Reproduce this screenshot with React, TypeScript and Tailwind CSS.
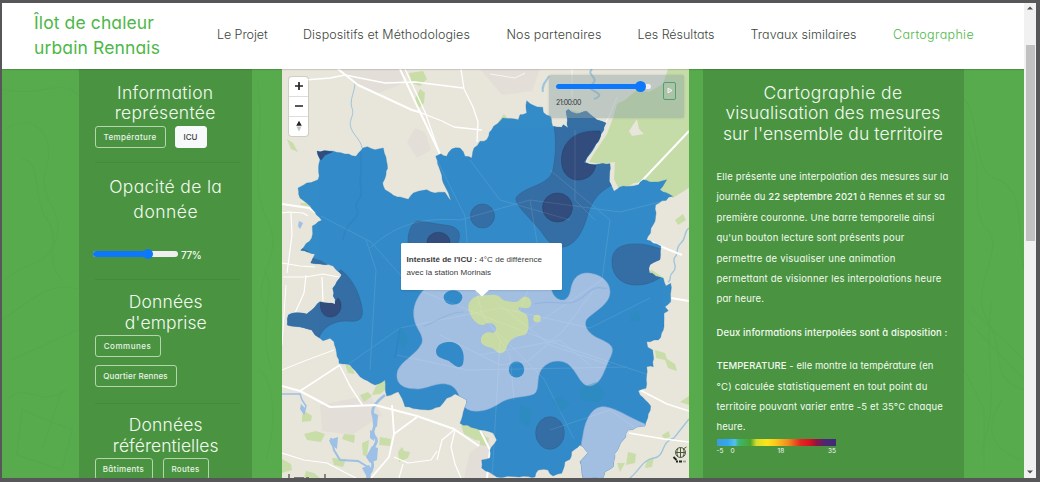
import React from "react";

type Pt = [number, number];

/* Adds small deterministic wiggles to a coarse boundary. */
function rough(points: Pt[], amp: number): string {
  let seed = 7;
  const rnd = () => {
    seed = (seed * 16807) % 2147483647;
    return seed / 2147483647 - 0.5;
  };
  let d = "";
  points.forEach((p, i) => {
    const q = points[(i + 1) % points.length];
    const len = Math.hypot(q[0] - p[0], q[1] - p[1]);
    const n = Math.max(1, Math.round(len / 4));
    d += `${i ? "L" : "M"}${p[0]} ${p[1]}`;
    for (let k = 1; k < n; k++) {
      const t = k / n;
      d += `L${(p[0] + (q[0] - p[0]) * t + rnd() * amp).toFixed(1)} ${(p[1] + (q[1] - p[1]) * t + rnd() * amp).toFixed(1)}`;
    }
  });
  return d + "Z";
}

const TERRITORY: Pt[] = [
  [317, 151], [333, 151], [356, 156.3], [362.7, 148], [367.3, 146.7], [375, 149.7], [383.3, 148], [384.3, 153],
  [387.3, 164.7], [386, 174.7], [382.7, 183], [385, 189.7], [393.3, 195.3], [408.3, 199.3], [413.3, 193],
  [426.7, 189.7], [435, 193], [445, 192.3], [451, 200.7], [443.3, 183], [435.7, 156.3], [441, 153.7], [446.7, 156.3],
  [451.7, 149], [460, 148], [465, 156.3], [471.7, 158], [474, 148], [480, 141.3], [486.7, 139.7], [491.7, 129.7],
  [500, 121.3], [502.7, 118], [518.3, 119.7], [520, 114.7], [526.7, 113], [526.7, 100.7], [533.3, 105.3],
  [542.7, 107.3], [543.3, 112.3], [550.7, 116.3], [552.7, 126.3], [561.7, 127.3], [563.3, 124.7], [568.3, 128],
  [566, 111.3], [568.3, 109.3], [576.7, 113.7], [586.7, 111.3], [596.7, 119.7], [606, 123], [600, 138], [590, 154],
  [585, 162.3], [595, 164.7], [610, 163.7], [609.3, 181.3], [614, 191.3], [620, 187], [630, 186.3], [638.3, 184.7],
  [643.3, 179.7], [653.3, 182], [666.7, 179.7], [660, 189.7], [672.7, 196.3], [655.7, 204.7], [655, 221.3],
  [646.7, 239.7], [661, 246.3], [660, 259.7], [650, 264.7], [649.3, 272.7], [663.3, 278.3], [666, 286],
  [670.7, 283.3], [670.7, 301.7], [665, 306.7], [668.3, 310.7], [664, 313.3], [663.3, 330], [658.3, 340],
  [646.7, 341.7], [647.7, 347.3], [652.7, 350], [653.3, 366.7], [646.7, 366.7], [646, 388.3], [638.3, 390.7],
  [640, 395], [650.7, 406], [645, 426], [628.3, 430], [623.3, 440], [615, 453.3], [613.3, 466.7], [605, 471.7],
  [603, 478], [583, 478], [580, 461.7], [588, 452.7], [580, 445], [571.7, 451.7], [570, 459.3], [565, 461.7],
  [561.7, 473.3], [553, 476], [548, 470], [538.3, 470], [535, 477], [496.7, 477], [481.7, 468], [481.7, 460],
  [490, 458], [490, 450], [496.7, 440], [493, 433], [480, 430], [460, 423.3], [466.7, 400], [455, 394],
  [446.7, 398.3], [440, 406.7], [428.3, 410], [405, 406.7], [398.3, 391.7], [386.7, 396], [385, 380], [375, 385],
  [360, 376.7], [350, 365], [339, 363.3], [334, 341.7], [330, 338.3], [323, 340.7], [315, 335], [311.7, 330],
  [287.3, 325], [288.3, 315], [295, 312.7], [306.7, 314], [320, 301.7], [335, 304.3], [332.7, 288.3], [341.7, 275],
  [333, 266], [320, 264], [310.7, 263], [315, 254], [300.7, 250.3], [311.7, 238], [312.3, 226], [321.7, 220.3],
  [310, 206], [300, 198], [298, 188], [306.7, 183], [318, 179.7], [320, 159.7],
];
const TERRITORY_PATH = rough(TERRITORY, 1.6);

function HeatMap() {
  return (
    <svg viewBox="282 69 407 409" className="block h-[409px] w-[407px]" aria-hidden="true">
      <defs>
        <clipPath id="territory"><path d={TERRITORY_PATH} /></clipPath>
      </defs>
      <rect x="282" y="69" width="407" height="409" fill="#e8e5da" />
      <g fill="#e3dfd8">
        <path d="M338 69h70l-8 16-22 8-25-10z M415 128l10 4 6 18-14 8-10-16z M320 405l50-10 12 20-30 20-30-4z M470 452l20-12 4 38h-30z M480 69h60l-8 22-30 4z" />
      </g>
      {/* woodland */}
      <path fill="#c5dca8" d="M668 69h21v119l-16 10-13-9-8-8-18 2-14 8-6-12 1-17-14 2-12-2 6-10 12-18 6-16 4-14 8-4 12-10 12 2 14-8z" />
      <path fill="#e8e5da" d="M629 131l8-12 2 10 5 5-12 2z M673 198l16-10v24l-8 2z" />
      <g fill="#c9dda9">
        <path d="M409 73l14-2 4 8-7 7-8-3z M420 89l5 4-1 10-6 6-3-10z M287 139l6 4 5 9-7-3z M300 203l8 0 2 4-9-2z" />
        <path d="M345 364l6 2 4 8-7-1z M360 395l8-3 4 4-8 6z M376 386l9-6 3 8-8 6-8 1z M304 434l12-3 9 3-4 8-14-2z M344 434l11 1-1 8-12-4z M380 437l11 2-1 7-11-1z M398 452l4-5 2 4 6 1-2 6-9 4z M332 458l14 1-3 8-9-2z M362 443l7-3-2 17-4-2z M302 415l4-3 6 4-1 5-9 1z" />
        <path d="M461 425l19 3 9 14-14-2-11-6z M480 435l9 3-2 8-7-1z M655 350l10 3 2 6 8 5 2 7-9-3-3-8-9-2z M628 452l8 2-1 9-9 2z M647 460l7-3-2 10-7 1z M680 402l9-6v9z M617 463l8 0-5 9z M644 273l8-3 12 8-5 8-9-8z M675 220l8-6 3 6-8 5z M498 122l6-8 4 5-7 5z M570 110l9 2-3 4z M662 435l7-4 1 6-6 2z M282 459l9 5 1 6-10 3z M306 471l8 2 6 5h-16z" />
      </g>
      {/* rivers and ponds */}
      <g fill="none" stroke="#9fc5dc" strokeWidth="1">
        <path d="M355 82c0 10-6 18-3 26s-4 12-1 20 10 12 11 20" />
        <path d="M543 92c-2-8 4-11 6-16 M592 69c-6 6 6 8 2 13s-6 6 0 9 8 5 0 8" strokeWidth="2" />
        <path d="M689 228c-6 4-2 10-8 15s-2 10-6 14 4 10-2 15 0 8-5 10 M630 478c10-8 12-18 24-20s6-16 20-20l15-19" strokeWidth="1.4" />
      </g>
      <g fill="none" stroke="#9dc0e6" strokeWidth="2">
        <path d="M282 394h18l2 6 4 6-2 8" strokeWidth="1.500" />
        <path d="M385 395c-8 6-16 14-11 22s-5 14 1 20-8 14-4 22 0 12-4 19" strokeWidth="2.800" />
        <path d="M331 438l3 12 6 10 18 1 10 6 2 11" />
      </g>
      <g fill="#9dc0e6">
        <path d="M329 440l9-3-1 12-6-4z M372 412l6 3-1 12-4-2z M372 446l6 2-1 12-7 3-4-6z M362 468l7-3 4 6-6 6z M299 221l4 2-3 6-2-3z M301 404l4 4-1 7-4-6z M370 430l5 3-1 8-4-3z" />
      </g>
      {/* roads */}
      <g fill="none" stroke="#fff" strokeLinejoin="round">
        <path d="M282 204l27 4 12 8 M338 69l20 16 54 25 7 2 M400 69l20 43 20 42" strokeWidth="2" />
        <path d="M405 69l20 43 14 40" strokeWidth="1.300" />
        <path d="M292 81l38-3 15-3 40 8 30-1 48 6 M461 69l3 20 9 18 5 15-1 20 M419 112l23 9 12 6 28 3" strokeWidth="1.300" />
        <path d="M282 213l7-1 14 1 5 3 M291 213l1 22-5 38 M282 263l18 3 15 1" strokeWidth="1.200" />
        <path d="M283 277l23 0 17-3 16 3 M322 277l1 24 M306 275l-2 18-9 20" strokeWidth="1.200" />
        <path d="M286 285l-4 60 M282 370l25-10 27-10" strokeWidth="1" />
        <path d="M282 386l18 5 30 16 45-2 42 11 37 13 25 17" strokeWidth="2" />
        <path d="M300 391l40-26 M340 366l10 20 13 20" strokeWidth="1.500" />
        <path d="M417 417l-23 17-5 23-18 21 M392 405l2 29" strokeWidth="1.800" />
        <path d="M455 430l-4 17 4 17 6 14 M454 430l-12 10-5 20 M394 457l14 6 23-3 6-9 M399 478l4-14" strokeWidth="1.200" />
        <path d="M282 453l22 7 23 3 17 9 12 6" strokeWidth="1.200" />
        <path d="M480 430l10 20-3 28" strokeWidth="2" />
        <path d="M638 185l51-54 M647 240l20 9 15 6 M671 298l18 3" strokeWidth="2" />
        <path d="M640 390l27 14 22 7 M629 433l35 6 25 3" strokeWidth="1.600" />
        <path d="M617 97l-8 20-5 8 M572 69v28 M490 74l25 4 10-5" strokeWidth="1" opacity=".7" />
      </g>
      <path d={TERRITORY_PATH} fill="#338bc8" stroke="#2f7fb9" strokeWidth=".3" />
      <g clipPath="url(#territory)">
        {/* cooler and rural zones */}
        <g fill="#366fa4" stroke="#2f6293" strokeWidth=".6">
          <path d="M552 118C556 130 557 150 553 170C551 180 540 184 530 188C522 192 515 196 516 200C518 208 530 218 540 230C546 238 550 246 560 247C575 248 584 230 588 213C593 200 598 192 614 184L625 100L550 100Z" />
          <path d="M408 242C408 232 411 223 418 221L444 225C456 226 461 230 459 240L455 250H408Z" />
          <ellipse cx="482.500" cy="216" rx="12" ry="12" />
          <path d="M612 262C612 248 622 244 636 244C646 244 650 246 665 250V274C655 282 646 285 636 285C622 285 612 276 612 262Z" />
          <path d="M341 270C354 280 360 296 362 308C364 320 358 322 348 321C336 320 322 326 318 340L284 330V300Z" />
          <ellipse cx="550" cy="433" rx="14.300" ry="16.300" />
          <path d="M299 247l9 4 1 1-8 2z M308 256l14 5 22 15-6-1-12-8-18-2z" stroke="none" />
        </g>
        <g fill="#314c7d" stroke="#29446f" strokeWidth=".5">
          <path d="M600 131C582 130 568 136 563 150C558 168 566 179 577 180C588 180 594 174 596 165L583 163L590 152L601 136Z" />
          <ellipse cx="557.500" cy="207.500" rx="15" ry="14.500" />
          <ellipse cx="438.500" cy="242" rx="11.500" ry="9.800" />
          <path d="M321 300l13 4 4-6c6 6 3 19-8 19-8 0-11-9-9-17z" />
          <path d="M314 149l18 3-7 3-4 5z" />
        </g>
        {/* urban zone */}
        <g fill="#a2bfe2" stroke="#8fb0d8" strokeWidth=".5">
          <path d="M428 286C418 294 412 306 414 318C416 330 424 334 422 343C416 356 398 362 397 374C396 386 406 389 418 389C430 388 438 381 450 385C460 389 460 404 467 409C476 414 490 410 500 403C510 396 524 398 534 394C540 390 536 378 541 370C548 360 560 359 568 364C578 372 580 386 590 386C602 384 604 370 610 358C616 346 610 344 600 339C590 335 582 326 587 319C596 310 610 304 610 292C610 280 598 273 586 273C576 274 573 280 571 288C569 304 558 302 553 294L550 286Z" />
          <path d="M603 478h-20c-3-10-4-25 0-43 3-20 12-30 23-28 12 2 20 9 39 17l-3 54z" />
        </g>
        <g fill="#338bc8">
          <ellipse cx="453" cy="297.500" rx="9.300" ry="7.300" />
          <path d="M436 351C437 344 443 342 450 342C460 342 466 352 463 364C460 370 455 366 449 361C442 358 436 358 436 351Z" />
          <ellipse cx="516.500" cy="369.500" rx="7.700" ry="8" />
        </g>
        {/* city centre */}
        <path fill="#c9dba5" d="M481 295C472 296 466 304 469 311C471 319 478 326 484 325C488 323 481 325 488 323C496 322 499 331 493 333C488 331 480 333 481 342C484 348 492 346 496 351C501 356 506 352 507 346C511 338 516 336 525 335C530 331 529 322 527 315C523 312 517 311 519 307C524 308 529 310 531 305C532 299 528 296 523 297C519 300 519 302 513 302C506 301 503 301 500 297C494 293 488 296 481 295Z" />
        <circle cx="537" cy="318.500" r="3.800" fill="#c9dba5" />
        <g fill="none" stroke="#fff" strokeWidth="1" opacity=".1">
          <path d="M321 216l50 26 40 45 80 32 80 30 90 30 M435 156l30 60 4 50 15 53 60 60 30 60 M370 248c30-28 60-30 90-28l70-20 90 12 40-10 M340 370l60-42 100-20 90 20 60-30 M500 340l-8 138 M397 355l70 15 160-3 M530 200l10 60-20 50 M550 170l60 50-8 60-90 60 M366 240l10 30-6 100 M470 160l30 40 70 20" />
          <path d="M440 335l60 30 28-4 35-30 30-40 M500 305l50 40 60 20 M480 355l80-15 30 25 M550 430l60-20 28 20 M575 130v70l20 20 M480 310l30 45 4 45" />
        </g>
        <path d="M360 150c4 20-2 30 1 40s-8 10-4 20-12 10-14 30 M400 328l-5 30" fill="none" stroke="#2b7cb9" strokeWidth="1.500" opacity=".35" />
        <path d="M424 326c14-4 22-14 40-14 M534 304c20-6 34 6 50-8s14-6 24-8" fill="none" stroke="#7ea8d8" strokeWidth="1.200" opacity=".4" />
        <g fill="#278bb8" opacity=".35">
          <path d="M580 388l16-6 10 12-8 9-18-3z M552 400l10-4 8 8-10 8z M520 405l12 4-3 18-10-6z M630 315l8-4 2 9-9 2z M400 326l8 12-4 12-6-8z M355 392l6-3-2 9z" />
        </g>
      </g>
      {/* basemap credit mark */}
      <g stroke="#4c5a3c" fill="none" strokeWidth="1">
        <circle cx="680.500" cy="452.500" r="5" />
        <path d="M675.500 452.500h10 M680.500 447.500v10 M678 448.500c-1.500 3-1.500 5 0 8 M683 448.500c1.500 3 1.500 5 0 8 M684 448.500l2.500-1.500" />
      </g>
      <path d="M673.500 457l3 3 M676 461.500h2 M679 461.500h3" stroke="#222" strokeWidth="1.800" />
      <path d="M683 461.500h3" stroke="#9aa58c" strokeWidth="1.800" />
      <path d="M289 478v-4 M325 478v-4" stroke="#444" strokeWidth="1.200" />
      <path d="M294 477.500h10 M306 477.500h3" stroke="#777" strokeWidth="1" />
    </svg>
  );
}

/* Faint contour drawing printed on the green background. */
function Contours() {
  return (
    <svg viewBox="0 0 1022 408" preserveAspectRatio="none" className="absolute inset-0 h-full w-full" aria-hidden="true">
      <g fill="none" stroke="#3f8f38" strokeWidth="1" opacity=".11">
        <path d="M0 20c40 10 60-14 78 8M4 60c30-20 50 10 40 40s20 40 10 70-30 20-50 40M20 90c20 0 10 40 25 60s-5 40 15 60M0 250c30-20 50-40 76-30M10 290l66-30M5 330c20-20 30 10 60-10M20 340l50 20-10 40-45-15zM60 320l-20 60" />
        <path d="M955 20c30 30 10 80 40 90s20 60 27 90M965 60c20 40 0 80 20 100s-20 60 0 90 0 60 37 70M965 250l57 60M970 240l52 50M990 230c-10 60 10 90-10 150M1000 330c-20 30-10 50 20 60M962 300l20 40 0 60" />
        <path d="M255 10c10 60-10 100 10 140s-20 60 0 90M262 200c14 20-8 60 8 100M258 300c10 10 20 40 6 90" />
        <path d="M90 20c30 40 10 60 50 90s10 60 60 80M100 240c50 10 40 60 120 50M110 380c40-40 90-10 130-60M720 100c60 30 60 10 120 60M780 300c50-30 60 20 170-30M860 20c-10 50 40 60 60 110" />
      </g>
    </svg>
  );
}

function Line({ className = "", children }: { className?: string; children: React.ReactNode }) {
  return <span className={"block whitespace-nowrap " + className}>{children}</span>;
}

function Title({ className = "leading-[20.5px]", children }: { className?: string; children: React.ReactNode }) {
  return <h2 className={"text-center text-[17.5px] font-light text-[#f2fbf0] " + className}>{children}</h2>;
}

function Tag({ active = false, className = "", children }: { active?: boolean; className?: string; children: React.ReactNode }) {
  return (
    <button
      className={
        "flex h-[22px] shrink-0 items-center justify-center whitespace-nowrap rounded-[3px] border text-[8px] font-medium " +
        (active ? "border-[#f8f9fa] bg-[#f8f9fa] text-[#3a3d40] " : "border-[#b5d5ad] text-[#e9f5e6] ") +
        className
      }
    >
      {children}
    </button>
  );
}

function Divider({ className = "" }: { className?: string }) {
  return <hr className={"h-px w-[145px] border-0 bg-[#468b3b] " + className} />;
}

function ControlsPanel() {
  return (
    <aside className="relative ml-[76.500px] h-[409px] w-[173.500px] overflow-hidden bg-[#4a9140]/95 pl-[16px] pr-[15px] pt-[13.500px]">
      <Title className="pr-[1px] leading-[20.500px]">
        <Line className="tracking-[0.3px]">Information</Line>
        <Line className="tracking-[0.3px]">représentée</Line>
      </Title>
      <div className="mt-[2px] flex gap-[9px]">
        <Tag className="w-[71px] tracking-[0.35px]">Température</Tag>
        <Tag active className="w-[32px]">ICU</Tag>
      </div>
      <Divider className="mt-[14px]" />
      <Title className="mt-[11.500px] leading-[25px]">
        <Line className="tracking-[0.34px]">Opacité de la</Line>
        <Line className="tracking-[0.5px]">donnée</Line>
      </Title>
      <div className="-ml-[2px] mt-[22px] flex h-[16px] items-center">
        <div className="flex h-[6px] w-[85px] items-center rounded-[3px] bg-[#efefef]">
          <div className="h-[6px] w-[52px] rounded-l-[3px] bg-[#0d78fb]" />
          <div className="-ml-[2px] size-[10px] rounded-full bg-[#0d78fb]" />
        </div>
        <span className="ml-[3.500px] mt-[2px] text-[10px] font-medium tracking-[-0.450px] text-[#f2fbf0]">77%</span>
      </div>
      <Divider className="mt-[17px]" />
      <Title className="mt-[12px] leading-[20.500px]">
        <Line className="tracking-[0.15px]">Données</Line>
        <Line className="tracking-[0.1px]">d'emprise</Line>
      </Title>
      <div className="mt-[2px] flex flex-col items-start gap-[8px]">
        <Tag className="w-[66px] tracking-[0.5px]">Communes</Tag>
        <Tag className="w-[82px] tracking-[0.15px]">Quartier Rennes</Tag>
      </div>
      <Divider className="mt-[16px]" />
      <Title className="mt-[11px] leading-[20.500px]">
        <Line className="tracking-[0.15px]">Données</Line>
        <Line className="tracking-[0.05px]">référentielles</Line>
      </Title>
      <div className="mt-[2px] flex gap-[10px]">
        <Tag className="w-[58px] tracking-[0.33px]">Bâtiments</Tag>
        <Tag className="w-[46px] tracking-[0.27px]">Routes</Tag>
      </div>
    </aside>
  );
}

function MapView() {
  return (
    <div className="relative ml-[30px] h-[409px] w-[407px] shrink-0 overflow-hidden">
      <HeatMap />
      <div className="absolute left-[7px] top-[7.500px] flex w-[19px] flex-col rounded-[3px] bg-white shadow-[0_0_0_1px_rgba(0,0,0,.1)]">
        <button className="flex h-[20px] items-center justify-center border-b border-[#ddd]">
          <svg viewBox="0 0 8 8" className="size-[8px]"><path d="M4 .5v7M.5 4h7" stroke="#222" strokeWidth="1.700" strokeLinecap="round" /></svg>
        </button>
        <button className="flex h-[20px] items-center justify-center border-b border-[#ddd]">
          <svg viewBox="0 0 8 8" className="size-[8px]"><path d="M.5 4h7" stroke="#222" strokeWidth="1.700" strokeLinecap="round" /></svg>
        </button>
        <button className="flex h-[19px] items-center justify-center">
          <svg viewBox="0 0 8 12" className="h-[12px] w-[8px]"><path d="M1.200 5.700L4 .8l2.800 4.900z" fill="#222" /><path d="M1.500 6.500h5L4 11.500z" fill="#c4c4c4" /></svg>
        </button>
      </div>
      <div className="absolute left-[266.500px] top-[6px] flex h-[43px] w-[135.500px] rounded-[2px] bg-[#8fa3a3]/45 shadow-[0_0_2px_rgba(100,110,100,.3)]">
        <div className="ml-[7.500px] mt-[6.500px] w-[97px]">
          <div className="flex h-[10px] items-center">
            <div className="flex h-[5px] w-[95px] items-center rounded-[3px] bg-[#efefef]">
              <div className="h-[5px] w-[81px] rounded-l-[3px] bg-[#0d78fb]" />
              <div className="-ml-[2px] size-[11px] rounded-full bg-[#0d78fb]" />
            </div>
          </div>
          <div className="mt-[6px] text-[7px] leading-[9px] tracking-[-0.500px] text-[#30383c]">21:00:00</div>
        </div>
        <button className="ml-[10px] mt-[6.500px] flex h-[18px] w-[13px] items-center justify-center rounded-[2px] border border-[#4f9f79]">
          <svg viewBox="0 0 6 7" className="h-[7px] w-[6px]"><path d="M1 1.200l4 2.300-4 2.300z" fill="#b9cfc5" stroke="#f4f8f4" strokeWidth="1" /></svg>
        </button>
      </div>
      <div className="absolute left-[118.500px] top-[173.500px] h-[47.500px] w-[161px] rounded-[1.500px] bg-white pl-[6px] pt-[10.500px] font-['Liberation_Sans',sans-serif] text-[8px] leading-[13.300px] text-[#3a3a3a] shadow-[0_1px_2px_rgba(0,0,0,.1)]">
        <Line className="tracking-[0.054px]"><b>Intensité de l'ICU :</b> 4°C de différence</Line>
        <Line className="tracking-[0.04px]">avec la station Morinais</Line>
        <svg viewBox="0 0 14 7" className="absolute left-[74px] top-[47px] h-[7px] w-[14px]"><path d="M0 0h14L7 6.500z" fill="#fff" /></svg>
      </div>
    </div>
  );
}

function InfoPanel() {
  return (
    <section className="relative ml-[14px] h-[409px] w-[260.500px] shrink-0 overflow-hidden bg-[#4a9140]/95 pl-[13.500px] pt-[13.500px] text-[#f2fbf0]">
      <Title className="pr-[14px] leading-[20.500px]">
        <Line className="tracking-[0.4px]">Cartographie de</Line>
        <Line className="tracking-[0.17px]">visualisation des mesures</Line>
        <Line className="tracking-[0.08px]">sur l'ensemble du territoire</Line>
      </Title>
      <div className="mt-[23px] text-[9.500px] leading-[20.400px]">
        <p>
          <Line className="tracking-[0.149px]">Elle présente une interpolation des mesures sur la</Line>
          <Line className="tracking-[0.091px]">journée du <b className="font-medium">22 septembre 2021</b> à Rennes et sur sa</Line>
          <Line className="tracking-[0.185px]">première couronne. Une barre temporelle ainsi</Line>
          <Line className="tracking-[0.195px]">qu'un bouton lecture sont présents pour</Line>
          <Line className="tracking-[0.24px]">permettre de visualiser une animation</Line>
          <Line className="tracking-[0.204px]">permettant de visionner les interpolations heure</Line>
          <Line className="tracking-[0.116px]">par heure.</Line>
        </p>
        <p className="mt-[13px] font-medium"><Line className="tracking-[0.116px]">Deux informations interpolées sont à disposition :</Line></p>
        <p className="mt-[13px]">
          <Line className="tracking-[0.041px]"><b className="font-medium">TEMPERATURE</b> - elle montre la température (en</Line>
          <Line className="tracking-[0.235px]">°C) calculée statistiquement en tout point du</Line>
          <Line className="tracking-[0.162px]">territoire pouvant varier entre -5 et 35°C chaque</Line>
          <Line className="tracking-[0.089px]">heure.</Line>
        </p>
      </div>
      <div className="mt-[1px] h-[7px] w-[119.500px] bg-[linear-gradient(90deg,#3d9bdc_0%,#2fa8f0_9%,#55bff0_15%,#3bb878_18%,#4aa52c_28%,#d8dc28_33%,#fbe51b_42%,#fbc41a_50%,#f08a1d_60%,#e22a20_70%,#d81222_78%,#8a1746_84%,#4d2874_91%,#3d2a7a_100%)]" />
      <div className="mt-[1px] flex w-[119.500px] text-[6.500px] leading-[9px]">
        <span className="w-[14px]">-5</span>
        <span className="w-[47px]">0</span>
        <span>18</span>
        <span className="ml-auto">35</span>
      </div>
    </section>
  );
}

export default function App() {
  return (
    <div className="flex h-[482px] w-[1040px] overflow-hidden bg-[#57575a] pb-[4px] pl-[2px] pr-[4px] pt-[3px] font-['Inter',sans-serif] [font-feature-settings:'cv11']">
      <div className="flex h-[474.500px] w-[1022px] shrink-0 flex-col overflow-hidden">
        <header className="relative z-10 flex h-[66px] shrink-0 bg-white shadow-[0_1px_1px_rgba(0,0,0,.12)]">
          <div className="ml-[32px] mt-[6.500px] w-[183px] text-[17.500px] leading-[25.500px] text-[#4db748]">
            <Line className="tracking-[0.109px]">Îlot de chaleur</Line>
            <Line className="tracking-[0.127px]">urbain Rennais</Line>
          </div>
          <nav className="flex h-[65px] items-center whitespace-nowrap text-[12.500px] font-light text-[#3d463d]">
            <a className="w-[86px] tracking-[-0.07px]">Le Projet</a>
            <a className="w-[203.500px] tracking-[0.1px]">Dispositifs et Méthodologies</a>
            <a className="w-[131px] tracking-[0.116px]">Nos partenaires</a>
            <a className="w-[113px] tracking-[-0.035px]">Les Résultats</a>
            <a className="w-[142.500px] tracking-[0.036px]">Travaux similaires</a>
            <a className="tracking-[0.354px] text-[#4db748]">Cartographie</a>
          </nav>
        </header>
        <main className="relative flex h-[409px] shrink-0 bg-[#57ab4d]">
          <Contours />
          <ControlsPanel />
          <MapView />
          <InfoPanel />
        </main>
      </div>
      <div className="flex h-[475px] w-[12px] shrink-0 flex-col items-center bg-[#f1f1f1]">
        <svg viewBox="0 0 6 4" className="mt-[3px] h-[4px] w-[6px] shrink-0"><path d="M0 3.500L3 .5l3 3z" fill="#505050" /></svg>
        <div className="mt-[35px] h-[196px] w-[9px] bg-[#c1c1c1]" />
        <svg viewBox="0 0 6 4" className="mb-[4px] mt-auto h-[4px] w-[6px] shrink-0"><path d="M0 .5h6l-3 3z" fill="#505050" /></svg>
      </div>
    </div>
  );
}
